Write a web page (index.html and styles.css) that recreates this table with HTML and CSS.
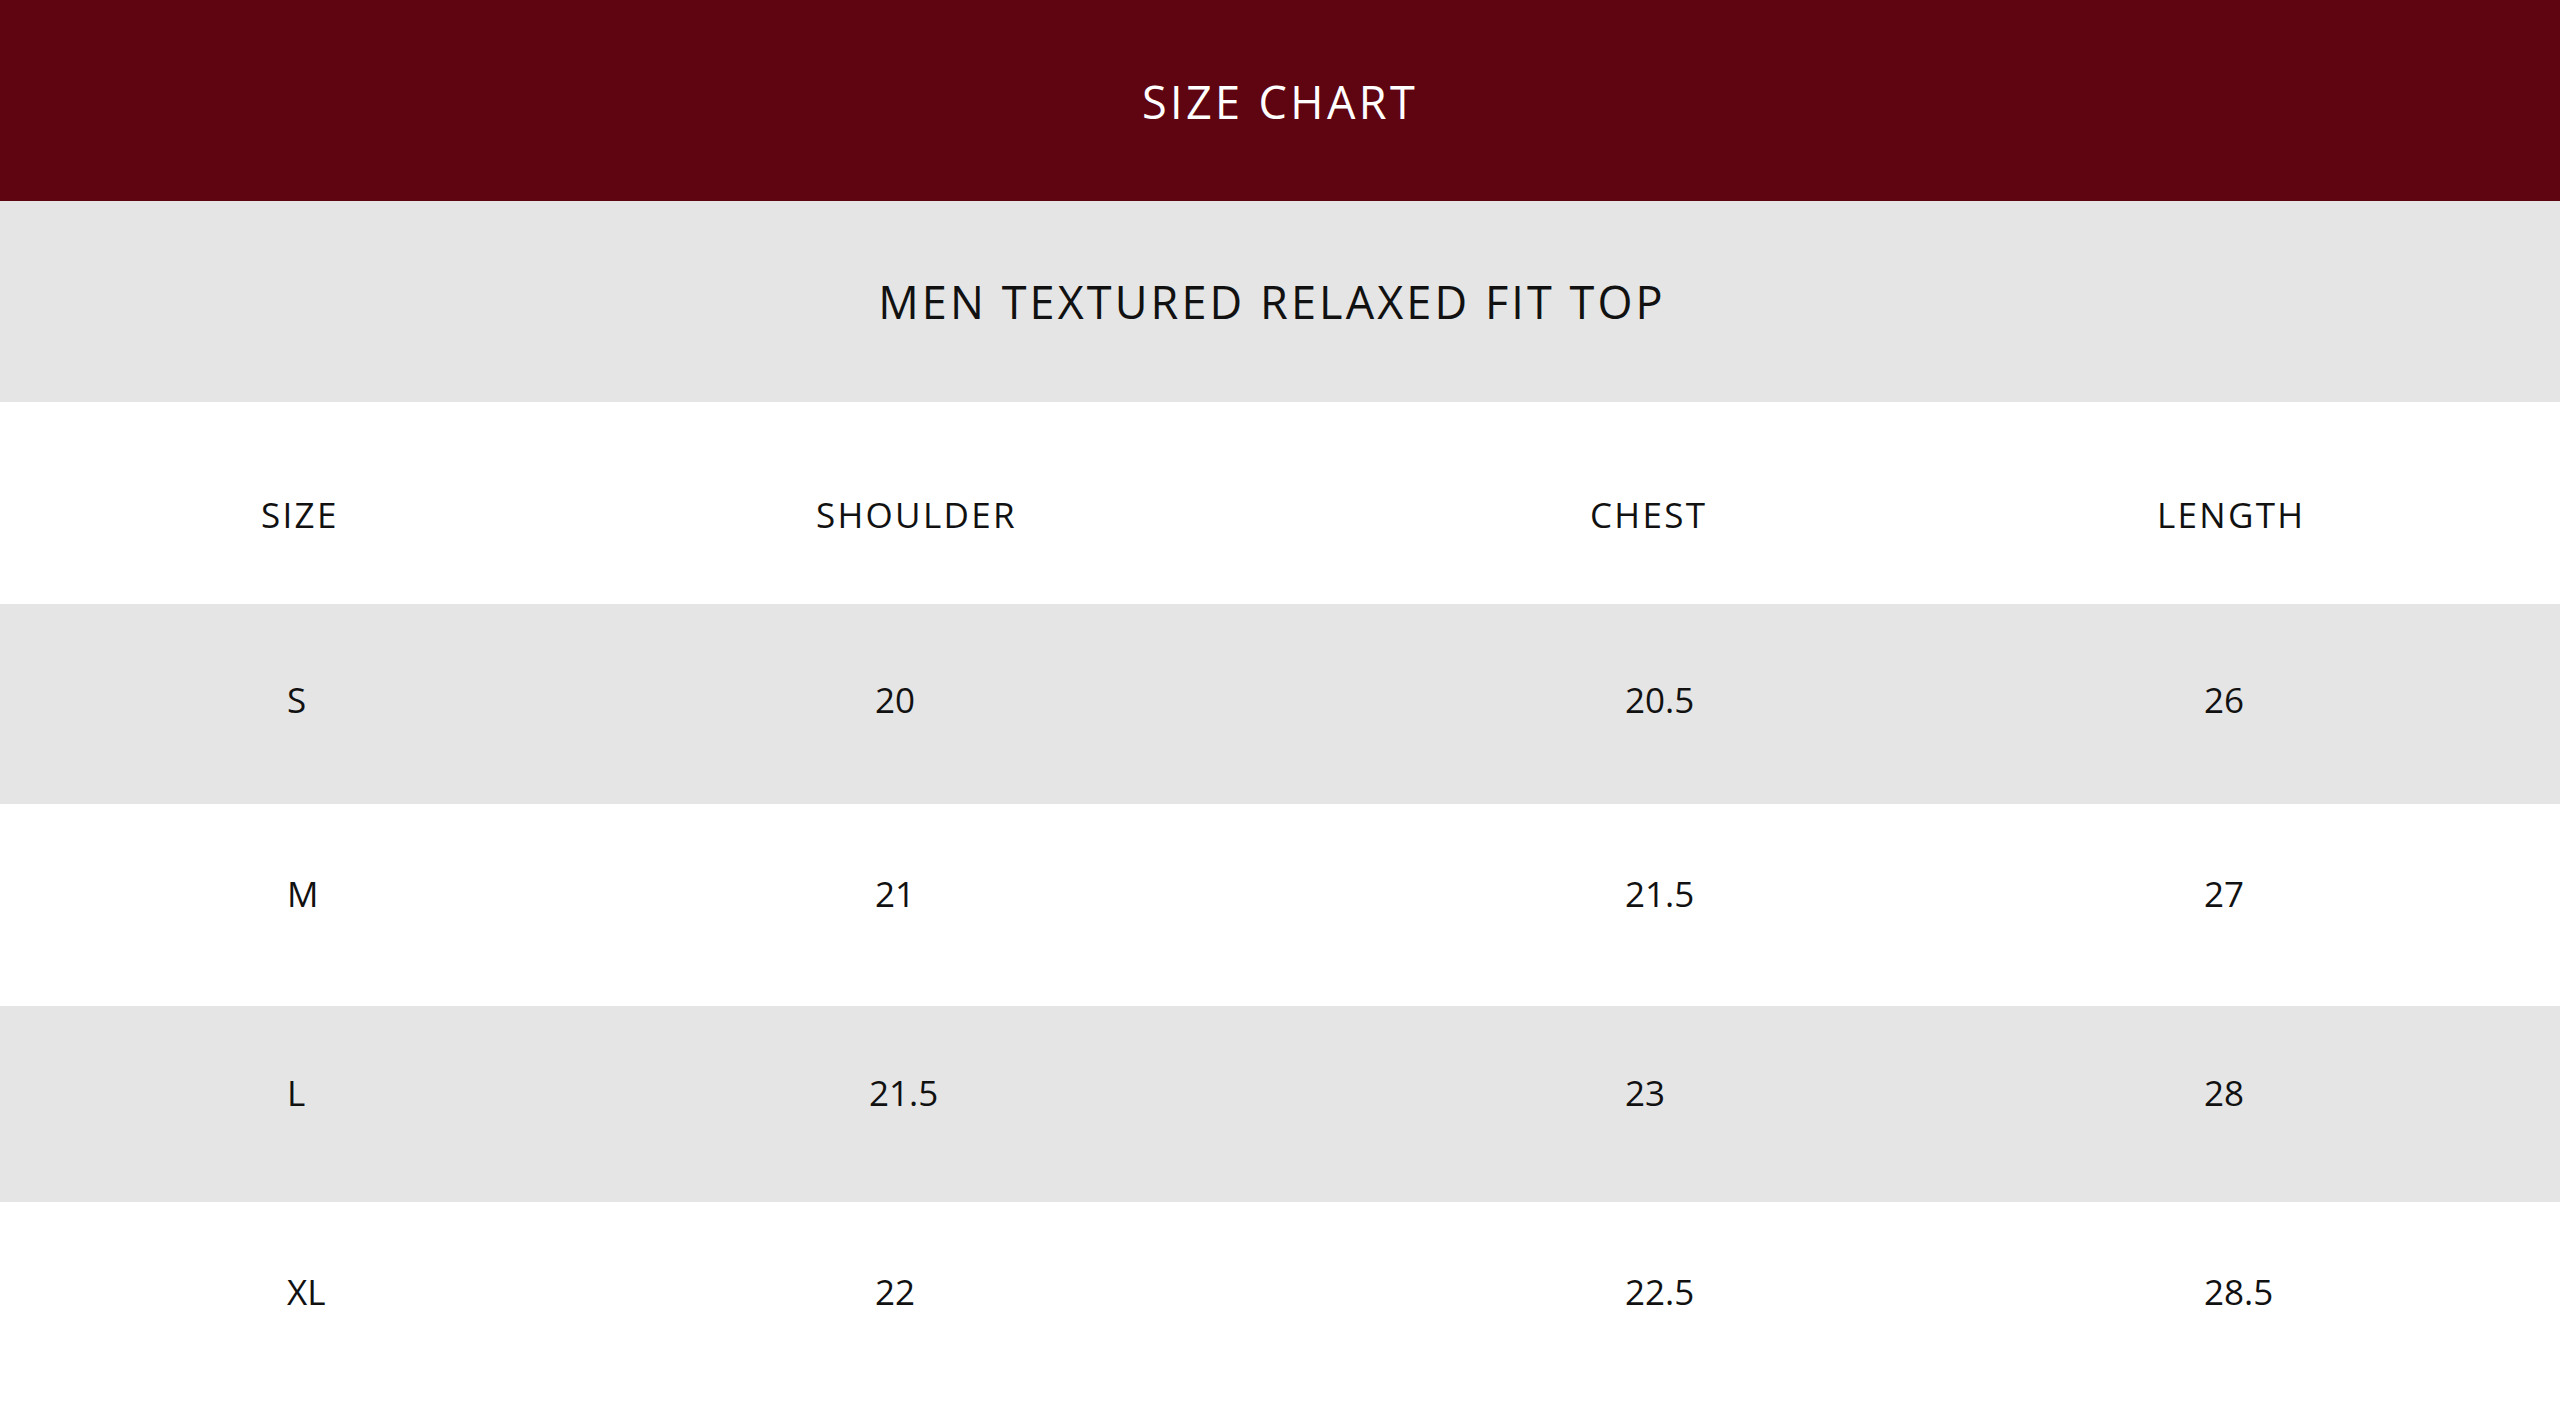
FILE: index.html
```
<!DOCTYPE html>
<html lang="en">
<head>
<meta charset="utf-8">
<title>Size Chart</title>
<link rel="stylesheet" href="styles.css">
</head>
<body>
<div class="chart">
  <div class="banner">SIZE CHART</div>
  <div class="product">MEN TEXTURED RELAXED FIT TOP</div>
  <div class="row head">
    <div class="cell h1">SIZE</div>
    <div class="cell h2">SHOULDER</div>
    <div class="cell h3">CHEST</div>
    <div class="cell h4">LENGTH</div>
  </div>
  <div class="row shade r1">
    <div class="cell c1">S</div>
    <div class="cell c2">20</div>
    <div class="cell c3">20.5</div>
    <div class="cell c4">26</div>
  </div>
  <div class="row r2">
    <div class="cell c1">M</div>
    <div class="cell c2">21</div>
    <div class="cell c3">21.5</div>
    <div class="cell c4">27</div>
  </div>
  <div class="row shade r3">
    <div class="cell c1">L</div>
    <div class="cell c2 c2w">21.5</div>
    <div class="cell c3">23</div>
    <div class="cell c4">28</div>
  </div>
  <div class="row r4">
    <div class="cell c1">XL</div>
    <div class="cell c2">22</div>
    <div class="cell c3">22.5</div>
    <div class="cell c4">28.5</div>
  </div>
</div>
</body>
</html>
```
FILE: styles.css
```
html, body {
  margin: 0;
  padding: 0;
  background: #ffffff;
}
body {
  font-family: "Open Sans", "Liberation Sans", sans-serif;
  color: #111111;
}
.chart {
  width: 2560px;
  height: 1404px;
  display: flex;
  flex-direction: column;
  overflow: hidden;
}
.banner {
  height: 201px;
  background: #5f0411;
  color: #ffffff;
  display: flex;
  align-items: center;
  justify-content: center;
  font-size: 45px;
  letter-spacing: 3.4px;
  padding-top: 2px;
  box-sizing: border-box;
}
.product {
  height: 201px;
  background: #e5e5e5;
  display: flex;
  align-items: center;
  justify-content: center;
  font-size: 45px;
  letter-spacing: 3.1px;
  color: #111111;
  padding-right: 16px;
  box-sizing: border-box;
}
.row {
  display: grid;
  grid-template-columns: 580px 870px 530px 580px;
  align-items: center;
  box-sizing: border-box;
  font-size: 35px;
}
.shade { background: #e5e5e5; }
.head { height: 202px; padding-top: 22px; letter-spacing: 2.3px; }
.r1 { height: 200px; padding-bottom: 10px; }
.r2 { height: 202px; padding-bottom: 24px; }
.r3 { height: 196px; padding-bottom: 24px; }
.r4 { height: 202px; padding-bottom: 24px; }
.cell { white-space: nowrap; }
.h1 { padding-left: 261px; }
.h2 { padding-left: 236px; }
.h3 { padding-left: 140px; }
.h4 { padding-left: 177px; }
.c1 { padding-left: 287px; }
.c2 { padding-left: 295px; }
.c2w { padding-left: 289px; }
.c3 { padding-left: 175px; }
.c4 { padding-left: 224px; }
```
